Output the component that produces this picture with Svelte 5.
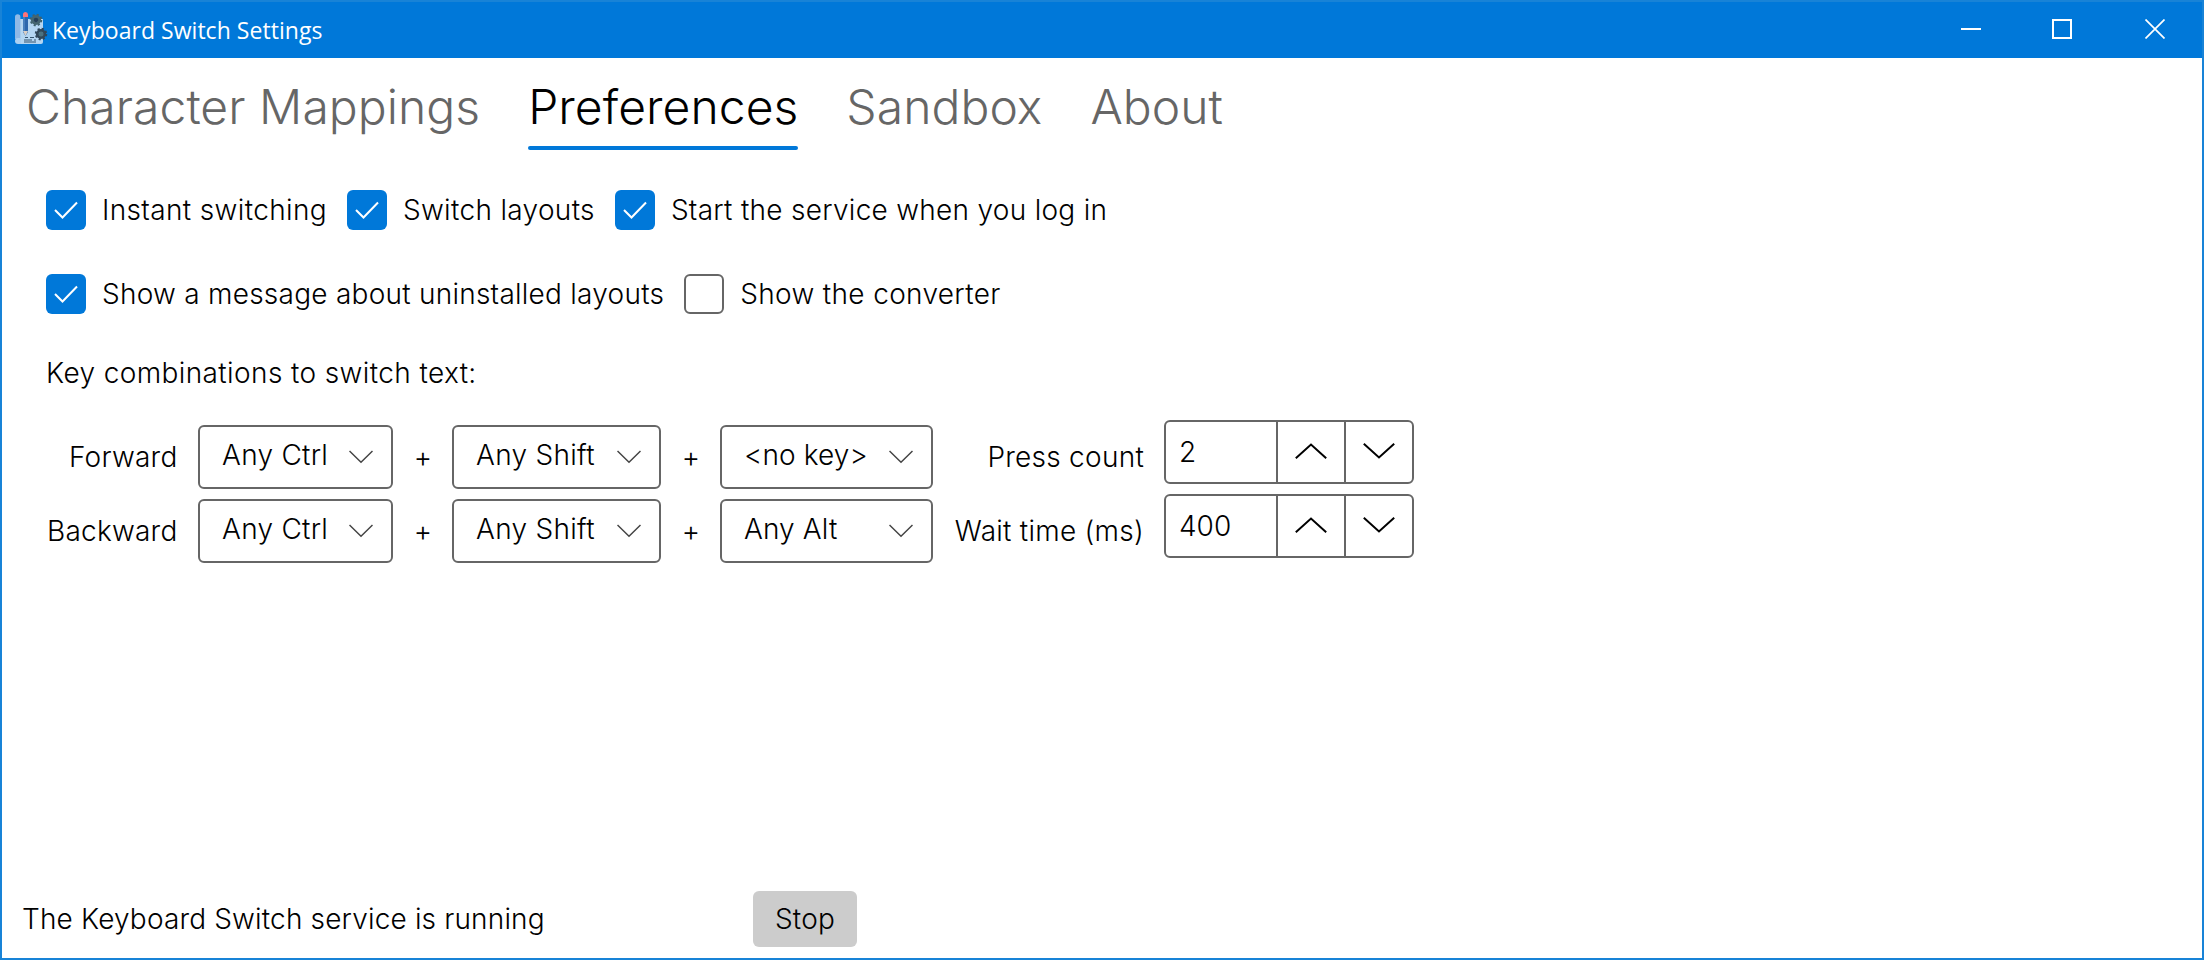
<script>
  const tabs = ['Character Mappings', 'Preferences', 'Sandbox', 'About'];
  let active = $state('Preferences');

  let options = $state([
    [
      { label: 'Instant switching', checked: true, tracking: 0.36 },
      { label: 'Switch layouts', checked: true, tracking: 0.33 },
      { label: 'Start the service when you log in', checked: true, tracking: 0.28 }
    ],
    [
      { label: 'Show a message about uninstalled layouts', checked: true, tracking: 0.25 },
      { label: 'Show the converter', checked: false, tracking: 0.34 }
    ]
  ]);

  const rows = [
    { label: 'Forward', keys: ['Any Ctrl', 'Any Shift', '<no key>'], setting: 'Press count', value: 2 },
    { label: 'Backward', keys: ['Any Ctrl', 'Any Shift', 'Any Alt'], setting: 'Wait time (ms)', value: 400 }
  ];
</script>

<div class="window">
  <header class="titlebar">
    <svg class="logo" width="34" height="34" viewBox="0 0 34 34">
      <path d="M6 7h23v23a2 2 0 0 1-2 2H6z" fill="#b5d6f2" />
      <path d="M1 5a2.700 2.700 0 0 1 5.400 0v22H1z" fill="#8fb9e6" />
      <path d="M1 29a3 3 0 0 1 3-3h3v6H4a3 3 0 0 1-3-3z" fill="#abd0f1" />
      <path d="M9 5h5v15l-2.500 4L9 20z" fill="#2d67ad" />
      <path d="M9 5h2v15H9z" fill="#477fbd" />
      <path d="M9 19h5l-2.500 5z" fill="#d9cfc6" />
      <path d="M9 5V2.500a2.500 2.500 0 0 1 5 0V5z" fill="#ff7378" />
      <path d="M11 25.500h3m2 0h4M10 28h8m2 0h2M10 30h12" stroke="#36546e" stroke-width="1.100" fill="none" />
      <g fill="none">
        <circle cx="22" cy="8" r="5" stroke="#3e616c" stroke-width="2.500" stroke-dasharray="2 1.930" />
        <circle cx="22" cy="8" r="3.600" stroke="#456570" stroke-width="3" />
        <circle cx="22" cy="8" r="2.300" fill="#263f58" />
        <circle cx="27" cy="22" r="5" stroke="#31475a" stroke-width="2.500" stroke-dasharray="2 1.930" />
        <circle cx="27" cy="22" r="3.600" stroke="#31475a" stroke-width="3" />
        <circle cx="27" cy="22" r="2.500" fill="#4b7180" />
      </g>
    </svg>
    <span class="title">Keyboard Switch Settings</span>
    <div class="controls">
      <svg width="20" height="20" viewBox="0 0 20 20"><path d="M0 10h20" /></svg>
      <svg width="20" height="20" viewBox="0 0 20 20"><path d="M1 1h18v18H1z" /></svg>
      <svg width="20" height="20" viewBox="0 0 20 20"><path d="M.5.500l19 19m0-19l-19 19" stroke-width="1.700" /></svg>
    </div>
  </header>

  <nav>
    {#each tabs as tab}
      <button class="tab" class:active={tab === active} onclick={() => (active = tab)}>{tab}</button>
    {/each}
  </nav>

  <main>
    {#each options as line}
      <div class="options">
        {#each line as option}
          <button class="option" onclick={() => (option.checked = !option.checked)}>
            <span class="box" class:checked={option.checked}>
              {#if option.checked}
                <svg width="40" height="40" viewBox="0 0 40 40"><path d="M9 20l7.500 7.500L31 12.500" /></svg>
              {/if}
            </span>
            <span style="letter-spacing: {option.tracking}px">{option.label}</span>
          </button>
        {/each}
      </div>
    {/each}

    <p class="heading">Key combinations to switch text:</p>

    <div class="grid">
      {#each rows as row}
        <span class="label">{row.label}</span>
        {#each row.keys as key, i}
          {#if i > 0}<span class="plus">+</span>{/if}
          <button class="combo" class:last={i === 2}>
            <span>{key}</span>
            <svg width="24" height="14" viewBox="0 0 24 14"><path d="M.5 1L12 12.200 23.500 1" /></svg>
          </button>
        {/each}
        <span class="label setting">{row.setting}</span>
        <div class="numeric">
          <span class="value">{row.value}</span>
          <button class="spin"><svg width="32" height="16" viewBox="0 0 32 16"><path d="M.8 15.200L16 1.500l15.200 13.700" /></svg></button>
          <button class="spin"><svg width="32" height="16" viewBox="0 0 32 16"><path d="M.8.800L16 14.500 31.200.800" /></svg></button>
        </div>
      {/each}
    </div>
  </main>

  <footer>
    <span class="status">The Keyboard Switch service is running</span>
    <button class="stop">Stop</button>
  </footer>
</div>

<style>
  :global(body) { margin: 0; background: #fff; }
  * { box-sizing: border-box; }
  .window {
    width: 2204px;
    height: 960px;
    border: 2px solid #1883d7;
    display: flex;
    flex-direction: column;
    background: #fff;
    color: #000;
    font: 300 28px/40px Inter, sans-serif;
    white-space: nowrap;
    overflow: hidden;
  }
  button {
    font: inherit;
    color: inherit;
    letter-spacing: inherit;
    background: none;
    border: 0;
    padding: 0;
    margin: 0;
    text-align: left;
  }
  svg { display: block; flex: none; }
  .titlebar {
    height: 56px;
    flex: none;
    background: #0078d9;
    color: #fff;
    display: flex;
    align-items: center;
    padding: 0 37px 0 12px;
  }
  .logo { margin-top: -2px; }
  .title { font: 400 23px/32px "Open Sans", sans-serif; letter-spacing: 0.04px; margin-left: 4px; }
  .controls { margin: -2px 0 0 auto; display: flex; gap: 72px; }
  .controls svg { fill: none; stroke: #fff; stroke-width: 2; }
  .controls svg:nth-child(1) { margin-right: -1px; }
  .controls svg:nth-child(3) { margin-left: 1px; }
  nav { height: 92px; flex: none; display: flex; gap: 48px; padding-left: 24px; }
  .tab {
    font-size: 48px;
    line-height: 97px;
    letter-spacing: 0.06px;
    color: #666;
    height: 92px;
  }
  .tab.active { color: #000; position: relative; }
  .tab.active::after {
    content: "";
    position: absolute;
    left: 0;
    right: 0;
    bottom: 0;
    height: 4px;
    border-radius: 2px;
    background: #0078d9;
  }
  main { flex: 1; padding: 40px 0 0 44px; }
  .options { display: flex; gap: 20px; height: 40px; margin-bottom: 44px; }
  .option { display: flex; gap: 16px; }
  .box { width: 40px; height: 40px; border-radius: 6px; border: 2px solid #666; }
  .box.checked { border: 0; background: #0078d9; }
  .box path { fill: none; stroke: #fff; stroke-width: 2; }
  .heading { margin: -5px 0 32px; letter-spacing: 0.39px; }
  .grid {
    display: grid;
    grid-template-columns: 152px 195px 59px 209px 59px 213px 231px 250px;
    grid-auto-rows: 64px;
    row-gap: 10px;
    align-items: center;
  }
  .label { text-align: right; padding-right: 20.500px; letter-spacing: 0.22px; }
  .label.setting { padding-right: 20px; letter-spacing: 0.26px; }
  .plus { text-align: center; padding-left: 1px; }
  .combo {
    height: 64px;
    border: 2px solid #666;
    border-radius: 6px;
    display: flex;
    justify-content: space-between;
    align-items: center;
    padding: 0 18px 4px 22px;
    letter-spacing: 0.28px;
  }
  .combo.last { letter-spacing: 0.12px; }
  .combo path { fill: none; stroke: #444; stroke-width: 1.500; }
  .combo svg { margin-top: 4px; }
  .numeric {
    height: 64px;
    margin-top: -10px;
    border: 2px solid #666;
    border-radius: 6px;
    display: flex;
  }
  .value { width: 110px; padding: 10px 0 0 13px; }
  .spin {
    width: 68px;
    border-left: 2px solid #666;
    display: flex;
    justify-content: center;
    padding-top: 21px;
  }
  .spin path { fill: none; stroke: #000; stroke-width: 2; }
  footer { height: 67px; flex: none; display: flex; align-items: flex-start; padding-left: 20px; }
  .status { width: 731px; line-height: 56px; letter-spacing: 0.16px; }
  .stop { width: 104px; height: 56px; border-radius: 6px; background: #ccc; text-align: center; letter-spacing: 0.200px; }
</style>
